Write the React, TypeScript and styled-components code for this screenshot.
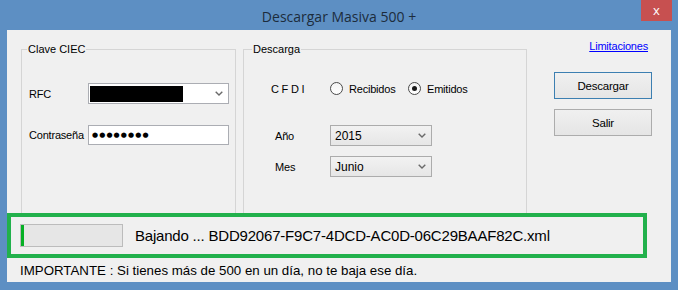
import React from "react";
import styled, { createGlobalStyle } from "styled-components";

const GlobalStyle = createGlobalStyle`
  html, body {
    margin: 0;
    padding: 0;
    background: #5d8fc3;
  }
  * {
    box-sizing: border-box;
  }
`;

const Window = styled.div`
  width: 678px;
  height: 290px;
  background: #5d8fc3;
  padding: 0 7px 8px;
  display: flex;
  flex-direction: column;
  font-family: "Liberation Sans", Arial, sans-serif;
  font-size: 11px;
  color: #000;
`;

const TitleBar = styled.div`
  height: 30px;
  display: grid;
  grid-template-columns: 1fr auto 1fr;
`;

const Title = styled.div`
  grid-column: 2;
  align-self: center;
  font-family: "Open Sans", "Noto Sans", sans-serif;
  font-size: 14px;
  color: #1c2c3c;
  padding-top: 2px;
`;

const CloseButton = styled.div`
  grid-column: 3;
  justify-self: end;
  width: 31px;
  height: 21px;
  margin-right: -1px;
  background: #c75050;
  color: #fff;
  display: flex;
  align-items: center;
  justify-content: center;
  font-family: "Open Sans", sans-serif;
  font-size: 13px;
  padding-bottom: 2px;
`;

const Client = styled.div`
  flex: 1;
  background: #f0f0f0;
  display: flex;
  flex-direction: column;
`;

const TopRow = styled.div`
  height: 183px;
  display: flex;
  padding-left: 14px;
`;

const GroupBox = styled.div<{ $width: number; $gap?: number }>`
  width: ${(p) => p.$width}px;
  margin: 19px 0 -2px ${(p) => p.$gap ?? 0}px;
  border: 1px solid #d5d5d5;
  display: flex;
  flex-direction: column;
`;

const Caption = styled.span<{ $indent: number }>`
  align-self: flex-start;
  line-height: 13px;
  margin: -7px 0 0 ${(p) => p.$indent}px;
  padding: 0 1px;
  background: #f0f0f0;
`;

const FieldRow = styled.div<{ $top: number; $pad: number }>`
  display: flex;
  align-items: center;
  margin-top: ${(p) => p.$top}px;
  padding-left: ${(p) => p.$pad}px;
`;

const Label = styled.span<{ $width: number; $indent?: number }>`
  width: ${(p) => p.$width}px;
  padding-left: ${(p) => p.$indent ?? 0}px;
  letter-spacing: -0.2px;
`;

const TextCombo = styled.div`
  width: 141px;
  height: 21px;
  background: #fff;
  border: 1px solid #abadb3;
  display: flex;
  align-items: center;
  justify-content: space-between;
  padding: 0 5px 0 1px;
`;

const Redacted = styled.div`
  width: 93px;
  height: 16px;
  background: #000;
`;

const PasswordBox = styled.div`
  width: 141px;
  height: 20px;
  background: #fff;
  border: 1px solid #abadb3;
  display: flex;
  align-items: center;
  padding-left: 3px;
  font-family: "DejaVu Sans", sans-serif;
  font-size: 7px;
  letter-spacing: 1.1px;
`;

const ListCombo = styled.div`
  width: 102px;
  height: 21px;
  background: linear-gradient(#f2f2f2, #e6e6e6);
  border: 1px solid #acacac;
  display: flex;
  align-items: center;
  justify-content: space-between;
  padding: 0 5px 0 4px;
  font-size: 12px;
`;

const RadioOption = styled.label<{ $width?: number }>`
  display: flex;
  align-items: center;
  gap: 6px;
  width: ${(p) => (p.$width ? `${p.$width}px` : "auto")};
  letter-spacing: -0.2px;
`;

const RadioCircle = styled.span<{ $checked?: boolean }>`
  width: 13px;
  height: 13px;
  border-radius: 50%;
  border: 1px solid #4a4a4a;
  background: linear-gradient(#f4f4f4, #ffffff);
  display: flex;
  align-items: center;
  justify-content: center;

  &::after {
    content: "";
    width: 5px;
    height: 5px;
    border-radius: 50%;
    background: #1a1a1a;
    display: ${(p) => (p.$checked ? "block" : "none")};
  }
`;

const SideColumn = styled.div`
  flex: 1;
  display: flex;
  flex-direction: column;
  align-items: flex-end;
  padding-right: 19px;
`;

const HelpLink = styled.a`
  margin: 10px 4px 0 0;
  line-height: 13px;
  color: #0000ff;
  text-decoration: underline;
  letter-spacing: -0.2px;
`;

const ActionButton = styled.button<{ $primary?: boolean; $top: number }>`
  width: 98px;
  height: 27px;
  margin-top: ${(p) => p.$top}px;
  font-family: "Liberation Sans", Arial, sans-serif;
  font-size: 11.5px;
  color: #000;
  background: linear-gradient(#f0f0f0, #e5e5e5);
  border: 1px solid ${(p) => (p.$primary ? "#3c7fb1" : "#acacac")};
  letter-spacing: -0.2px;
  padding: 0;
`;

const StatusFrame = styled.div`
  width: 640px;
  height: 45px;
  border: 4px solid #22b14c;
  display: flex;
  align-items: center;
  padding-left: 9px;
`;

const ProgressTrack = styled.div`
  width: 103px;
  height: 23px;
  border: 1px solid #bcbcbc;
  background: #e6e6e6;
  display: flex;
`;

const ProgressFill = styled.div`
  background: #06b025;
`;

const StatusText = styled.span`
  margin-left: 12px;
  font-size: 15px;
  letter-spacing: -0.2px;
`;

const Notice = styled.div`
  height: 24px;
  display: flex;
  align-items: center;
  padding-left: 13px;
  font-size: 13.3px;
`;

const Chevron = () => (
  <svg width="8" height="5" viewBox="0 0 8 5">
    <path d="M0.7 0.7 L4 4 L7.3 0.7" stroke="#6a6a6a" strokeWidth="1.4" fill="none" />
  </svg>
);

export default function App() {
  const progress = 3;

  return (
    <>
      <GlobalStyle />
      <Window>
        <TitleBar>
          <Title>Descargar Masiva 500 +</Title>
          <CloseButton>x</CloseButton>
        </TitleBar>
        <Client>
          <TopRow>
            <GroupBox $width={215}>
              <Caption $indent={5}>Clave CIEC</Caption>
              <FieldRow $top={27} $pad={7}>
                <Label $width={59}>RFC</Label>
                <TextCombo>
                  <Redacted />
                  <Chevron />
                </TextCombo>
              </FieldRow>
              <FieldRow $top={21} $pad={7}>
                <Label $width={59}>Contraseña</Label>
                <PasswordBox>●●●●●●●●</PasswordBox>
              </FieldRow>
            </GroupBox>
            <GroupBox $width={284} $gap={7}>
              <Caption $indent={8}>Descarga</Caption>
              <FieldRow $top={26} $pad={27}>
                <Label $width={59}>C F D I</Label>
                <RadioOption $width={78}>
                  <RadioCircle />
                  Recibidos
                </RadioOption>
                <RadioOption>
                  <RadioCircle $checked />
                  Emitidos
                </RadioOption>
              </FieldRow>
              <FieldRow $top={30} $pad={27}>
                <Label $width={59} $indent={4}>Año</Label>
                <ListCombo>
                  2015
                  <Chevron />
                </ListCombo>
              </FieldRow>
              <FieldRow $top={10} $pad={27}>
                <Label $width={59} $indent={4}>Mes</Label>
                <ListCombo>
                  Junio
                  <Chevron />
                </ListCombo>
              </FieldRow>
            </GroupBox>
            <SideColumn>
              <HelpLink href="#">Limitaciones</HelpLink>
              <ActionButton $primary $top={19}>Descargar</ActionButton>
              <ActionButton $top={10}>Salir</ActionButton>
            </SideColumn>
          </TopRow>
          <StatusFrame>
            <ProgressTrack>
              <ProgressFill style={{ width: `${progress}%` }} />
            </ProgressTrack>
            <StatusText>Bajando ... BDD92067-F9C7-4DCD-AC0D-06C29BAAF82C.xml</StatusText>
          </StatusFrame>
          <Notice>IMPORTANTE : Si tienes más de 500 en un día, no te baja ese día.</Notice>
        </Client>
      </Window>
    </>
  );
}
